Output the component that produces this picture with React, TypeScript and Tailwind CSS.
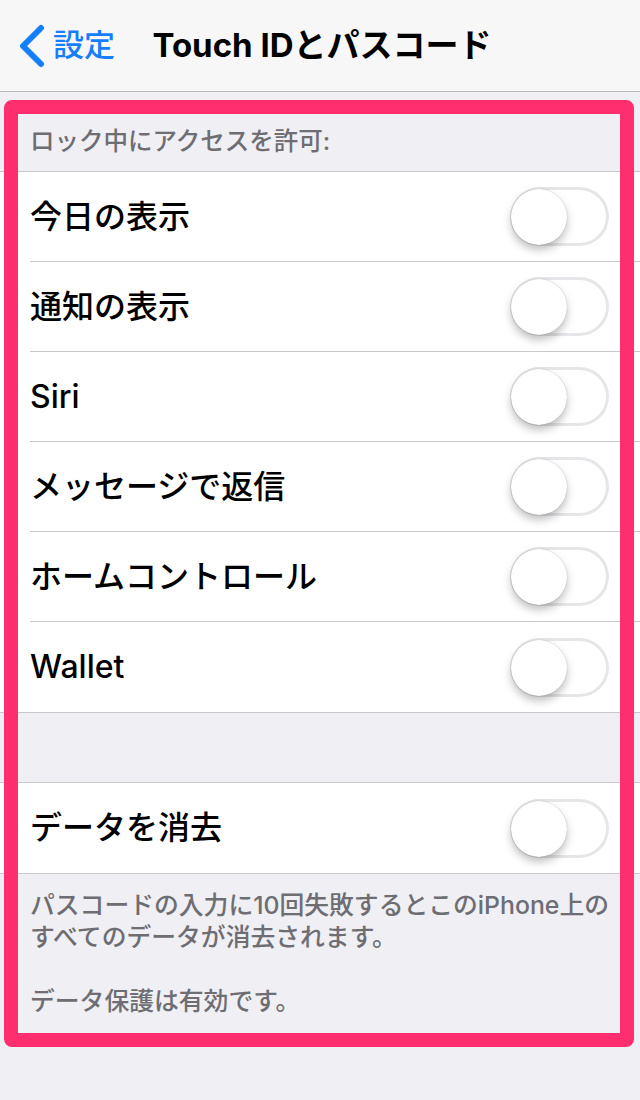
import React from "react";

const FONT = '"Inter", "Noto Sans CJK JP", "Noto Sans", sans-serif';

function Toggle() {
  return (
    <div className="relative h-[59px] w-[99px] shrink-0 rounded-full border-[3px] border-[#e6e6e9] bg-white">
      <div className="absolute left-[-2px] top-[-1px] h-[56px] w-[56px] rounded-full bg-white shadow-[0_5px_8px_rgba(0,0,0,0.25),0_0_1px_rgba(0,0,0,0.3)]" />
    </div>
  );
}

function Row({ label, last = false }: { label: string; last?: boolean }) {
  return (
    <div className="flex h-[90px] items-stretch pl-[30px]">
      <div
        className={
          "flex flex-1 items-center justify-between pr-[31px] " +
          (last ? "" : "border-b border-[#c8c7cc]")
        }
      >
        <span className="text-[32px] font-medium text-black">{label}</span>
        <Toggle />
      </div>
    </div>
  );
}

export default function App() {
  const lockItems = [
    "今日の表示",
    "通知の表示",
    "Siri",
    "メッセージで返信",
    "ホームコントロール",
    "Wallet",
  ];

  return (
    <div className="relative min-h-[1100px] w-[640px] bg-[#efeff4]" style={{ fontFamily: FONT }}>
      {/* navigation bar */}
      <div className="relative flex h-[92px] items-center border-b border-[#b9b9bd] bg-[#f7f7f8]">
        <div className="flex items-center pl-[17px]">
          <svg width="28" height="44" viewBox="0 0 28 44">
            <path
              d="M24 4 L6 22 L24 40"
              fill="none"
              stroke="#157efb"
              strokeWidth="6"
              strokeLinecap="round"
              strokeLinejoin="round"
            />
          </svg>
          <span className="ml-[8px] text-[31px] font-medium text-[#157efb]">設定</span>
        </div>
        <div className="absolute inset-x-0 top-0 flex h-[91px] items-center justify-center pl-[4px]">
          <span className="text-[33px] font-bold text-black">Touch IDとパスコード</span>
        </div>
      </div>

      {/* section header */}
      <div className="flex h-[79px] items-end px-[30px] pb-[14px]">
        <span className="text-[24.5px] font-medium leading-[32px] text-[#6d6d72]">ロック中にアクセスを許可:</span>
      </div>

      <div className="border-y border-[#c8c7cc] bg-white">
        {lockItems.map((item, i) => (
          <Row key={item} label={item} last={i === lockItems.length - 1} />
        ))}
      </div>

      <div className="h-[69px]" />

      <div className="border-y border-[#c8c7cc] bg-white">
        <Row label="データを消去" last />
      </div>

      {/* footer */}
      <div className="px-[30px] pt-[15px] text-[24.8px] font-medium leading-[32px] text-[#6d6d72]">
        <div className="whitespace-nowrap">パスコードの入力に10回失敗するとこのiPhone上の</div>
        <div>すべてのデータが消去されます。</div>
        <div className="h-[32px]" />
        <div>データ保護は有効です。</div>
      </div>

      {/* highlight frame */}
      <div className="pointer-events-none absolute left-[4px] top-[100px] h-[947px] w-[630px] rounded-[8px] border-[14px] border-[#ff2e6e]" />
    </div>
  );
}
